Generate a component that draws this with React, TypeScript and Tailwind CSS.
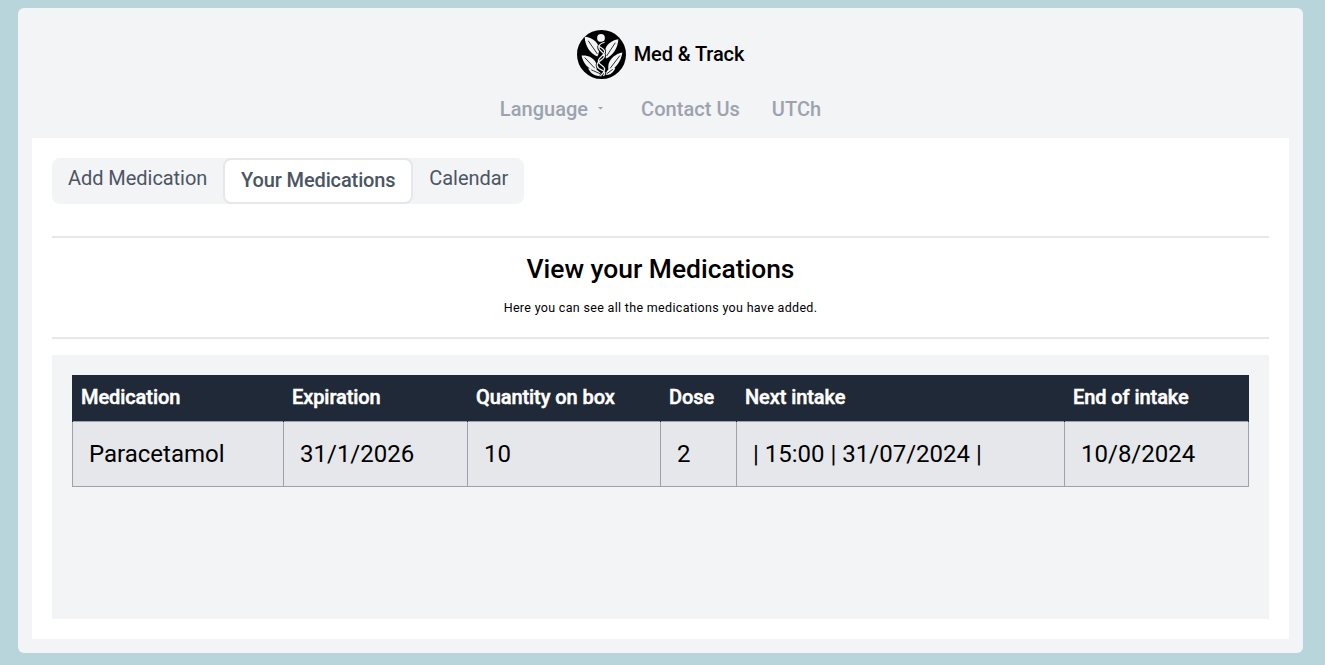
export default function App() {
  const headers = [
    ["Medication", "w-[211px]"],
    ["Expiration", "w-[184px]"],
    ["Quantity on box", "w-[193px]"],
    ["Dose", "w-[76px]"],
    ["Next intake", "w-[328px]"],
    ["End of intake", ""],
  ];
  const cells = ["Paracetamol", "31/1/2026", "10", "2", "| 15:00 | 31/07/2024 |", "10/8/2024"];
  return (
    <div className="h-[665px] w-full overflow-hidden bg-[#b8d5db] pl-[18px] pr-[22px] pt-2 pb-3 font-['Roboto',sans-serif]">
      <div className="flex h-[645px] flex-col rounded-md bg-[#f3f4f6] px-3.5 pb-3.5">
        <header className="flex h-[130px] flex-col items-center">
          <div className="mt-[21px] flex h-[50px] items-center gap-[8px]">
            <svg width="49" height="49" viewBox="0 0 48 48" aria-hidden="true">
              <circle cx="24" cy="24" r="24" fill="#000" />
              <circle cx="23.5" cy="7.8" r="3.8" fill="#f3f4f6" />
              <path d="M7.5 6.5C14 7 20 11 21.5 17c.6 3-.2 6.5-1.5 9C13 23 8 16 7.5 6.500z" fill="#f3f4f6" />
              <path d="M40.500 9C34 10 28.500 14 27.500 20c-.4 3 0 5.500 1 8C35 25 40 18 40.500 9z" fill="#f3f4f6" />
              <path d="M4.500 25c6-.5 12 2 14.500 8 .6 2 .4 4.500 0 7C11 38.500 6 33 4.500 25z" fill="#f3f4f6" />
              <path d="M44.500 22c-6 1-11.500 5-13.500 11-.5 2.500-.5 5 0 7 7-2 12-9 13.500-18z" fill="#f3f4f6" />
              <path d="M11 37.500c5-.7 11 1.500 14 7.500-6 1-12-2-14-7.500z" fill="#f3f4f6" />
              <path d="M37.500 37c-4.500-.5-8.500 2-10 7 4.500.5 8.500-2 10-7z" fill="#f3f4f6" />
              <path d="M11 10.500l9 13M37.500 12.500l-8.500 13M7.500 27l10 10.500M42 25l-9.500 12.500M14 39l9 4M35 38.500l-6 4.500" stroke="#000" strokeWidth="0.8" fill="none" />
              <path d="M27 12c-7 2-7 6-3 9s4 6-1 9-4 7 1 9 3 4 2 6M21 15c2 3 7 3 6 7s-7 5-6 9 7 4 6 8-3 4-4 6" fill="none" stroke="#000" strokeWidth="2.800" />
              <path d="M27 12c-7 2-7 6-3 9s4 6-1 9-4 7 1 9 3 4 2 6M21 15c2 3 7 3 6 7s-7 5-6 9 7 4 6 8-3 4-4 6" fill="none" stroke="#f3f4f6" strokeWidth="1.200" />
            </svg>
            <span className="text-[20px] leading-7 font-medium tracking-[-0.1px] text-black">Med &amp; Track</span>
          </div>
          <nav className="mt-[18px] flex h-6 items-center text-[20px] leading-6 font-medium tracking-[0.03px] text-[#9ca3af]">
            <span>Language</span>
            <svg className="mt-[-3px] ml-[9px]" width="7" height="4" viewBox="0 0 7 4" aria-hidden="true">
              <path d="M1 1h5L3.500 3.500z" fill="#9ca3af" />
            </svg>
            <span className="ml-[37px]">Contact Us</span>
            <span className="ml-[32px]">UTCh</span>
          </nav>
        </header>
        <main className="flex flex-1 flex-col bg-white p-5">
          <div className="flex h-[46px] w-[472px] items-start rounded-lg bg-[#f3f4f6] text-[20px] tracking-[-0.05px] text-[#4b5563]">
            <span className="ml-4 mt-[6px] leading-7">Add Medication</span>
            <span className="mt-0 ml-[16px] flex h-[46px] w-[190px] items-center justify-center rounded-lg border-2 border-[#e5e7eb] bg-white pb-[2px] font-medium tracking-[-0.12px] text-[#4b5563]">
              Your Medications
            </span>
            <span className="ml-[16px] mt-[6px] leading-7">Calendar</span>
          </div>
          <hr className="mt-8 border-0 border-t-2 border-[#e5e7eb]" />
          <section className="flex h-[99px] flex-col items-center">
            <h1 className="mt-[15px] text-[26.4px] leading-8 font-medium text-black">View your Medications</h1>
            <p className="mt-[13px] text-[12.5px] leading-5 tracking-[0.32px] text-black">Here you can see all the medications you have added.</p>
          </section>
          <hr className="border-0 border-t-2 border-[#e5e7eb]" />
          <section className="mt-4 flex-1 bg-[#f3f4f6] p-5">
            <table className="w-full table-fixed border-collapse">
              <thead>
                <tr className="h-[46px] bg-[#1f2937] text-white">
                  {headers.map(([h, w]) => (
                    <th key={h} className={`${w} border-x border-[#1f2937] pl-[8px] pr-2 pb-[2px] text-left text-[20px] font-medium tracking-[-0.08px] [-webkit-text-stroke:0.5px_#ffffff]`}>{h}</th>
                  ))}
                </tr>
              </thead>
              <tbody>
                <tr className="h-[65px] bg-[#e5e7eb]">
                  {cells.map((c) => (
                    <td key={c} className="border border-[#9ca3af] px-4 text-[24px] text-black">{c}</td>
                  ))}
                </tr>
              </tbody>
            </table>
          </section>
        </main>
      </div>
    </div>
  );
}
